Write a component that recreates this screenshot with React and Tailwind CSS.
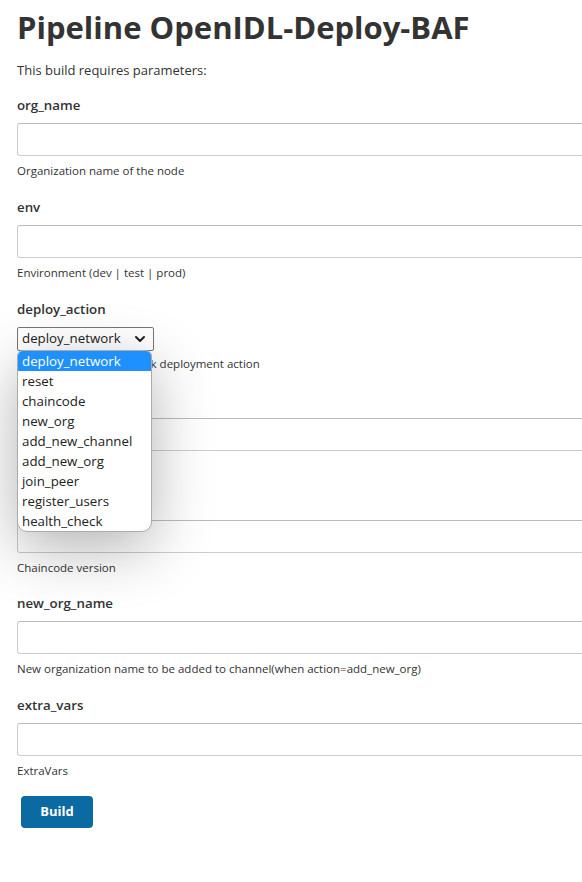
import { ChevronDown } from 'lucide-react';

const font = { fontFamily: '"Open Sans", "Noto Sans", sans-serif' };

// Text parameter: label, wide input, description
function TextParam({ name, description, tight = false }) {
  return (
    <div className={tight ? 'mb-[15px]' : 'mb-4'}>
      <div className="h-5 leading-5 text-[13.3px] font-semibold text-[#333]">{name}</div>
      <div className="mt-2 h-[33px] w-[760px] rounded-[3px] border border-[#ccc] border-t-[#bbb] bg-white" />
      <div className="mt-[5px] h-5 leading-5 text-[11.5px] text-[#333]">{description}</div>
    </div>
  );
}

const options = [
  'deploy_network',
  'reset',
  'chaincode',
  'new_org',
  'add_new_channel',
  'add_new_org',
  'join_peer',
  'register_users',
  'health_check',
];

// Choice parameter with its open option list
function ChoiceParam() {
  return (
    <div className="mb-4">
      <div className="h-5 leading-5 text-[13.3px] font-semibold text-[#333]">deploy_action</div>
      <div className="relative mt-2 w-[137px]">
        <div className="flex h-6 items-center justify-between rounded-[2px] border border-[#767676] bg-white pl-[4px] pr-[5px] text-[13.3px] text-[#222]">
          <span>deploy_network</span>
          <ChevronDown size={16} strokeWidth={3} className="text-[#222]" />
        </div>
        <div className="absolute left-0 top-[23px] z-10 w-[135px] overflow-hidden rounded-[6px] rounded-b-[10px] border border-[#aaa] bg-white shadow-[0_16px_60px_rgba(0,0,0,0.3)]">
          {options.map((o, i) => (
            <div
              key={o}
              className={`h-5 leading-5 px-[4px] text-[13.3px] ${i === 0 ? 'bg-[#1e90ff] text-white' : 'text-[#222]'}`}
            >
              {o}
            </div>
          ))}
        </div>
      </div>
      <div className="mt-[3px] h-5 leading-5 text-[11.5px] text-[#333]">Select the type of network deployment action</div>
    </div>
  );
}

export default function App() {
  return (
    <div className="min-h-[882px] w-[582px] overflow-hidden bg-white pl-[17px] text-[#333]" style={font}>
      <h1 className="mt-[7px] h-10 leading-10 whitespace-nowrap text-[31px] font-bold text-[#333]">
        Pipeline OpenIDL-Deploy-BAF
      </h1>
      <p className="mt-[13px] h-5 leading-5 text-[13px]">This build requires parameters:</p>
      <div className="mt-[15px]">
        <TextParam name="org_name" description="Organization name of the node" />
        <TextParam name="env" description="Environment (dev | test | prod)" />
        <ChoiceParam />
        <TextParam name="chaincode_name" description="Chaincode name" />
        <TextParam name="chaincode_version" description="Chaincode version" tight />
        <TextParam
          name="new_org_name"
          description="New organization name to be added to channel(when action=add_new_org)"
        />
        <TextParam name="extra_vars" description="ExtraVars" />
      </div>
      <button className="-mt-[1px] ml-1 h-8 w-[72px] rounded-[4px] bg-[#0b6aa2] text-[13px] font-bold text-white">
        Build
      </button>
    </div>
  );
}
